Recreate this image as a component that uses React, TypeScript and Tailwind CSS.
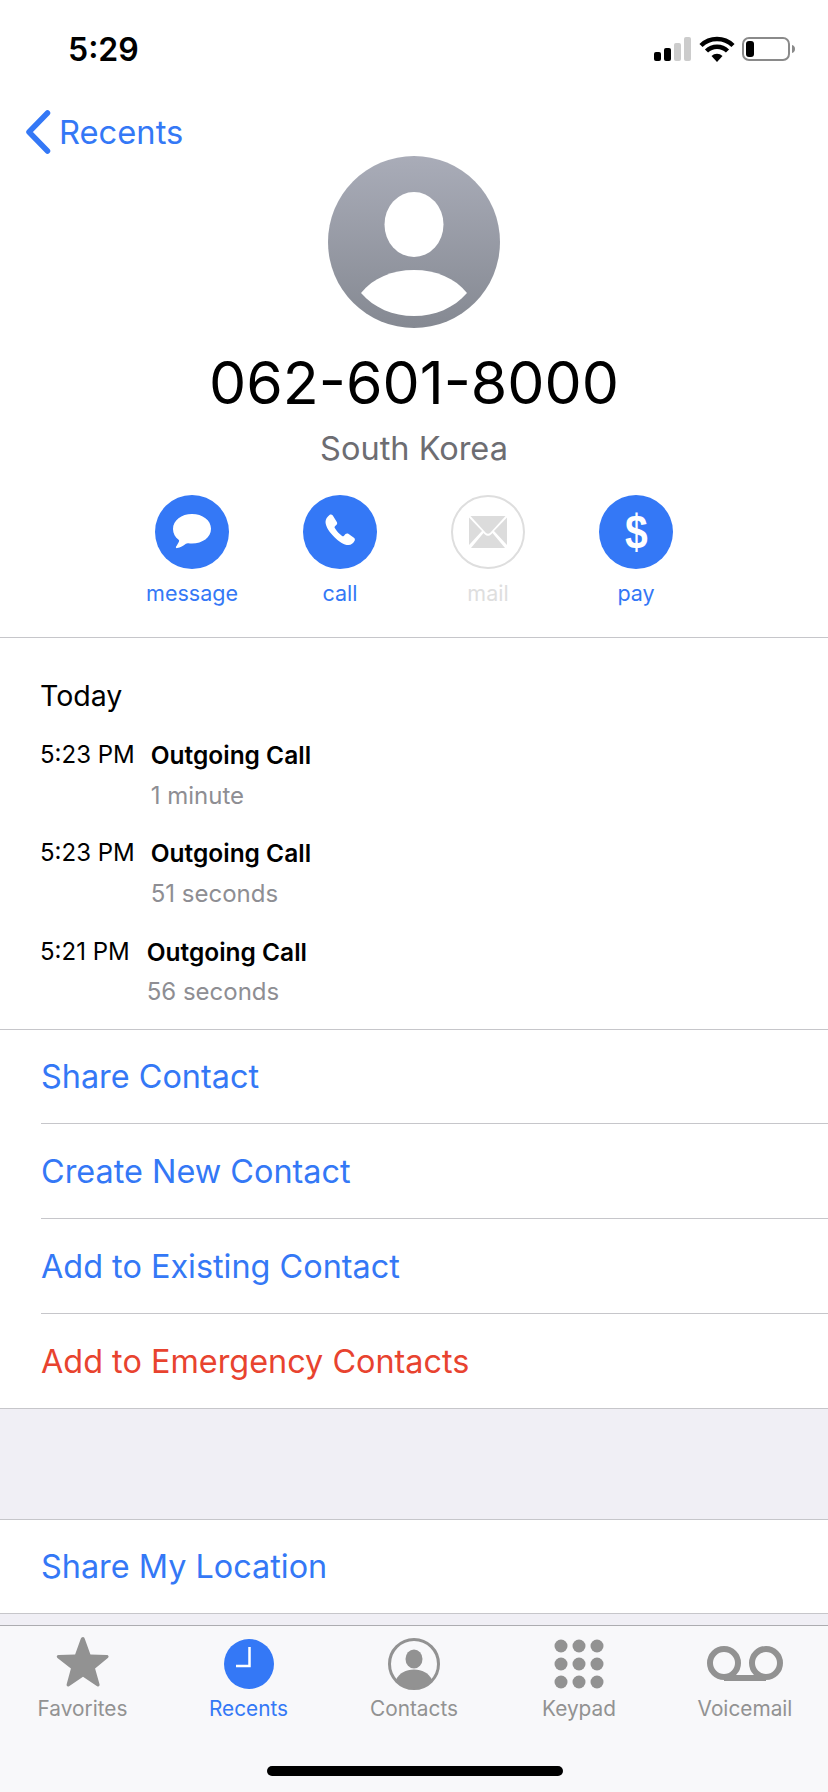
import React from 'react';

const font = "font-['Inter','Noto_Sans',sans-serif]";

const MessageIcon = () => (
  <svg width="38" height="36" viewBox="0 0 38 36" fill="white">
    <path d="M19 0C8.500 0 0 6.200 0 15c0 4.700 2.300 8.300 5.600 10.800.6.500.7 1 .4 1.600-.7 1.500-1.900 3.700-2.900 5.200-.6.900 0 1.700 1 1.500 3.300-.5 6.200-2.400 8.800-4.300.8-.5 1.500-.7 2.400-.6 1.200.2 2.400.3 3.700.3C29.500 29.500 38 23.600 38 14.800 38 6.200 29.500 0 19 0z" />
  </svg>
);

const PhoneIcon = () => (
  <svg width="36" height="40" viewBox="0 0 36 40" fill="white">
    <path d="M7.500 3c1.200-.8 2.500-.5 3.300.6l4 6.400c.6 1 .5 2-.3 2.800l-1.500 1.500c-.5.500-.6 1.200-.2 1.800 1.800 3 4.500 6 7.300 8 .6.400 1.200.3 1.700-.2l1.700-1.800c.8-.8 1.900-.9 2.800-.3l5.600 3.900c1 .7 1.300 2 .7 3-1.300 2.300-3.400 4.300-6.100 4.300-4.600 0-9.900-3.500-14-7.800C8.300 21.300 3.500 14.800 3.500 10c0-2.900 1.800-5.300 4-7z" />
  </svg>
);

const MailIcon = () => (
  <svg width="38" height="32" viewBox="0 0 38 32" fill="#dcdcdc">
    <path d="M1.500 0h35L21 17c-1.100 1.100-2.900 1.100-4 0z" />
    <path d="M0 1.500l13 13.500L0 29z" />
    <path d="M38 1.500L25 15l13 14z" />
    <path d="M14.500 17l1.500 1.500c1.600 1.700 4.400 1.700 6 0l1.500-1.500L36 32H2z" />
  </svg>
);

const ActionButton = ({ label, icon, disabled }: { label: string; icon: React.ReactNode; disabled?: boolean }) => (
  <div className="flex w-[148px] flex-col items-center">
    <div
      className={
        disabled
          ? 'flex h-[74px] w-[74px] items-center justify-center rounded-full border-2 border-[#dedede] bg-white'
          : 'flex h-[74px] w-[74px] items-center justify-center rounded-full bg-[#3478f6]'
      }
    >
      {icon}
    </div>
    <span
      className={
        disabled
          ? 'mt-[8px] text-[21.500px] leading-[32px] text-[#dedede]'
          : 'mt-[8px] text-[21.500px] leading-[32px] text-[#3478f6]'
      }
    >
      {label}
    </span>
  </div>
);

const CallRow = ({ time, duration, gap }: { time: string; duration: string; gap: string }) => (
  <div className="flex h-[98.300px] items-start">
    <span className="text-[24px] leading-[30px] text-black">{time}</span>
    <div className={`flex flex-col ${gap}`}>
      <span className="text-[24.500px] font-semibold leading-[30px] text-black">Outgoing Call</span>
      <span className="mt-[10.500px] text-[24px] leading-[30px] text-[#8e8e93]">{duration}</span>
    </div>
  </div>
);

const LinkRow = ({ label, red, last, h }: { label: string; red?: boolean; last?: boolean; h: string }) => (
  <div className="pl-[41px]">
    <div
      className={
        last
          ? `flex ${h} items-center pt-[2px]`
          : `flex ${h} items-center border-b border-[#c6c6ca] pt-[2px]`
      }
    >
      <span className={red ? 'text-[32.400px] text-[#e8432f]' : 'text-[32.400px] text-[#3478f6]'}>{label}</span>
    </div>
  </div>
);

const TabItem = ({ label, icon, active, w }: { label: string; icon: React.ReactNode; active?: boolean; w: string }) => (
  <div className={`flex flex-col items-center ${w}`}>
    <div className="flex h-[62px] items-center justify-center">{icon}</div>
    <span
      className={
        active
          ? 'mt-[1px] text-[20.800px] leading-[26px] text-[#3478f6]'
          : 'mt-[1px] text-[20.800px] leading-[26px] text-[#929292]'
      }
    >
      {label}
    </span>
  </div>
);

export default function App() {
  return (
    <div className={`flex h-[1792px] w-[828px] flex-col overflow-hidden bg-white ${font}`}>
      {/* status bar */}
      <div className="flex h-[88px] shrink-0 items-center justify-between pl-[68px] pr-[32px] pt-[12px]">
        <span className="text-[32px] font-semibold leading-none text-black">5:29</span>
        <svg width="142" height="28" viewBox="0 0 142 28">
          <rect x="0" y="16" width="7" height="9" rx="2" fill="#000" />
          <rect x="10" y="12" width="7" height="13" rx="2" fill="#000" />
          <rect x="20" y="7" width="7" height="18" rx="2" fill="#cccccc" />
          <rect x="30" y="1" width="7" height="24" rx="2" fill="#cccccc" />
          <path d="M47 9.500a23 23 0 0 1 32 0" stroke="#000" strokeWidth="4.500" fill="none" />
          <path d="M52.500 15a15 15 0 0 1 21 0" stroke="#000" strokeWidth="4.500" fill="none" />
          <path d="M57.500 20a8 8 0 0 1 11 0L63 26z" fill="#000" />
          <rect x="89" y="2" width="46" height="22" rx="6" fill="none" stroke="#8a8a8a" strokeWidth="2" />
          <rect x="92" y="5" width="8" height="16" rx="3" fill="#000" />
          <path d="M138 9c2 .5 3 2 3 4s-1 3.500-3 4z" fill="#8a8a8a" />
        </svg>
      </div>

      {/* back link */}
      <div className="flex h-[68px] shrink-0 items-start pl-[25px] pt-[22px]">
        <svg width="26" height="44" viewBox="0 0 26 44" fill="none">
          <path d="M22.500 3L4 22l18.500 19" stroke="#3478f6" strokeWidth="5.500" strokeLinecap="round" strokeLinejoin="round" />
        </svg>
        <span className="ml-[8px] text-[32.700px] leading-[44px] text-[#3478f6]">Recents</span>
      </div>

      {/* header */}
      <div className="flex shrink-0 flex-col items-center border-b border-[#c6c6ca]">
        <div className="h-[172px] w-[172px]">
          <svg width="172" height="172" viewBox="0 0 172 172">
            <defs>
              <linearGradient id="avatar" x1="0" y1="0" x2="0" y2="1">
                <stop offset="0" stopColor="#a9acb8" />
                <stop offset="1" stopColor="#858992" />
              </linearGradient>
            </defs>
            <circle cx="86" cy="86" r="86" fill="url(#avatar)" />
            <ellipse cx="86" cy="68.500" rx="29.500" ry="32.500" fill="#fff" />
            <path d="M33 137c12-15 31-23 53-23s41 8 53 23c-13 15-32 23-53 23s-40-8-53-23z" fill="#fff" />
          </svg>
        </div>
        <div className="mt-[19px] text-[59px] leading-[72px] text-black">062-601-8000</div>
        <div className="mt-[9px] text-[32.500px] leading-[42px] text-[#6d6d72]">South Korea</div>
        <div className="mt-[25px] flex h-[142px] w-[592px] items-start justify-center">
          <ActionButton label="message" icon={<MessageIcon />} />
          <ActionButton label="call" icon={<PhoneIcon />} />
          <ActionButton label="mail" disabled icon={<MailIcon />} />
          <ActionButton
            label="pay"
            icon={
              <span className="font-['Liberation_Sans',sans-serif] scale-x-[.85] text-[48px] font-bold leading-none text-white">$</span>
            }
          />
        </div>
      </div>

      {/* call history */}
      <div className="flex h-[392px] shrink-0 flex-col border-b border-[#c6c6ca] pl-[40px] pt-[40px]">
        <div className="text-[28.500px] leading-[36px] text-black">Today</div>
        <div className="mt-[26px]">
          <CallRow time="5:23 PM" duration="1 minute" gap="ml-[16px]" />
          <CallRow time="5:23 PM" duration="51 seconds" gap="ml-[16px]" />
          <CallRow time="5:21 PM" duration="56 seconds" gap="ml-[17px]" />
        </div>
        <div className="mt-auto h-px bg-[#c6c6ca]" />
      </div>

      {/* actions */}
      <div className="shrink-0 border-b border-[#c6c6ca]">
        <LinkRow h="h-[94px]" label="Share Contact" />
        <LinkRow h="h-[95px]" label="Create New Contact" />
        <LinkRow h="h-[95px]" label="Add to Existing Contact" />
        <LinkRow h="h-[94px]" label="Add to Emergency Contacts" red last />
      </div>

      <div className="h-[110px] shrink-0 bg-[#f0eff5]" />

      <div className="shrink-0 border-y border-[#c6c6ca]">
        <LinkRow h="h-[93px]" label="Share My Location" last />
      </div>

      <div className="h-[11px] shrink-0 bg-[#f0eff5]" />

      {/* tab bar */}
      <div className="relative flex-1 border-t border-[#acacb0] bg-[#f8f8fa] pt-[7px]">
        <div className="flex">
          <TabItem
            w="w-[165px]"
            label="Favorites"
            icon={
              <svg width="54" height="52" viewBox="0 0 58 56" fill="#929292" className="mb-[5px]">
                <path d="M29 1c1 0 1.600 1 2 2.300l6 16.700 17.500.5c2 0 2.800 2 1.200 3.200L42 35l4.800 17c.5 1.800-1 3-2.600 2L29 44 14 54c-1.600 1-3.100-.2-2.600-2L16 35 1.500 23.700C0 22.500.800 20.500 2.800 20.500L20.500 20l6-16.700C27 2 27.900 1 29 1z" />
              </svg>
            }
          />
          <TabItem
            w="w-[167px]"
            active
            label="Recents"
            icon={
              <svg width="50" height="50" viewBox="0 0 50 50">
                <circle cx="25" cy="25" r="25" fill="#3478f6" />
                <path d="M25.500 8v19H12" stroke="#fff" strokeWidth="2.500" fill="none" />
              </svg>
            }
          />
          <TabItem
            w="w-[164px]"
            label="Contacts"
            icon={
              <svg width="52" height="52" viewBox="0 0 52 52">
                <circle cx="26" cy="26" r="24.500" fill="none" stroke="#929292" strokeWidth="3" />
                <ellipse cx="26" cy="21" rx="8.500" ry="9.500" fill="#929292" />
                <path d="M8 42c3-7 10-10.500 18-10.500S41 35 44 42c-4.500 5-11 8-18 8s-13.500-3-18-8z" fill="#929292" />
              </svg>
            }
          />
          <TabItem
            w="w-[166px]"
            label="Keypad"
            icon={
              <svg width="50" height="50" viewBox="0 0 50 50" fill="#929292">
                <circle cx="7" cy="7" r="6.500" />
                <circle cx="25" cy="7" r="6.500" />
                <circle cx="43" cy="7" r="6.500" />
                <circle cx="7" cy="25" r="6.500" />
                <circle cx="25" cy="25" r="6.500" />
                <circle cx="43" cy="25" r="6.500" />
                <circle cx="7" cy="43" r="6.500" />
                <circle cx="25" cy="43" r="6.500" />
                <circle cx="43" cy="43" r="6.500" />
              </svg>
            }
          />
          <TabItem
            w="w-[166px]"
            label="Voicemail"
            icon={
              <svg width="76" height="36" viewBox="0 0 76 36" fill="none">
                <circle cx="17" cy="17" r="14" stroke="#929292" strokeWidth="6" />
                <circle cx="59" cy="17" r="14" stroke="#929292" strokeWidth="6" />
                <path d="M17 32h42" stroke="#929292" strokeWidth="6" />
              </svg>
            }
          />
        </div>
        <div className="absolute bottom-[16px] left-[267px] h-[10px] w-[296px] rounded-full bg-black" />
      </div>
    </div>
  );
}
